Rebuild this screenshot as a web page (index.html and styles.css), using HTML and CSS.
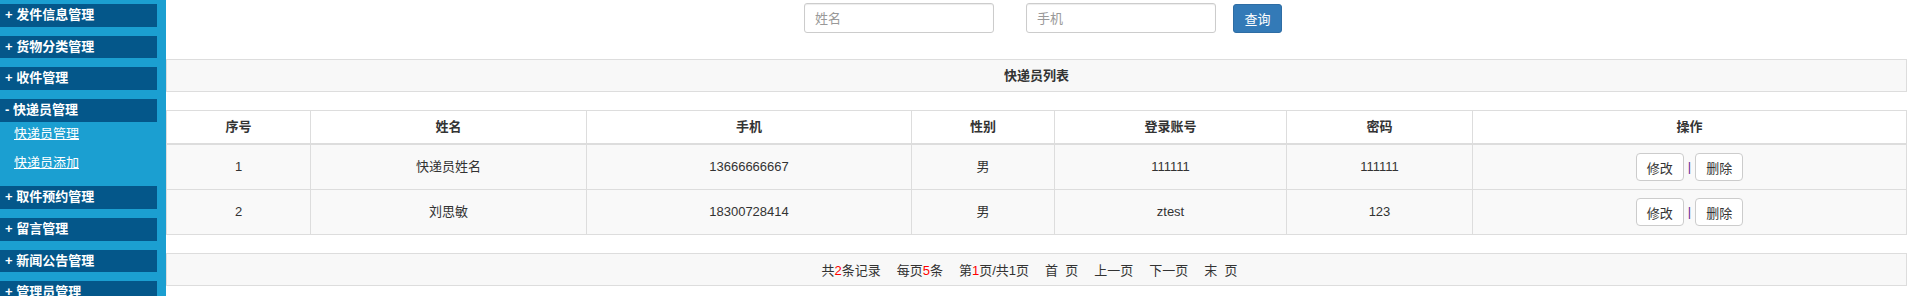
FILE: index.html
```html
<!DOCTYPE html>
<html>

<head>
<meta charset="UTF-8">
	<title>快递员列表</title>
	<link rel="stylesheet" href="styles.css">
</head>

<body>
	<div class="layout">
		<!-- left menu -->
		<div class="side">
			<ul class="menu">
				<li><div class="menu-head">+ 发件信息管理</div></li>
				<li><div class="menu-head">+ 货物分类管理</div></li>
				<li><div class="menu-head">+ 收件管理</div></li>
				<li class="open">
					<div class="menu-head">- 快递员管理</div>
					<ul class="sub">
						<li><a href="#">快递员管理</a></li>
						<li><a href="#">快递员添加</a></li>
					</ul>
				</li>
				<li><div class="menu-head">+ 取件预约管理</div></li>
				<li><div class="menu-head">+ 留言管理</div></li>
				<li><div class="menu-head">+ 新闻公告管理</div></li>
				<li><div class="menu-head">+ 管理员管理</div></li>
			</ul>
		</div>

		<div class="main">
			<!-- search -->
			<form class="search" onsubmit="event.preventDefault();">
				<input type="text" class="form-input name-input" placeholder="姓名">
				<input type="text" class="form-input phone-input" placeholder="手机">
				<button type="submit" class="btn-query">查询</button>
			</form>

			<div class="panel-title">快递员列表</div>

			<!-- courier list -->
			<table class="list" id="courierList">
				<colgroup>
					<col class="c-no">
					<col class="c-name">
					<col class="c-phone">
					<col class="c-sex">
					<col class="c-account">
					<col class="c-pwd">
					<col>
				</colgroup>
				<thead>
					<tr>
						<th>序号</th>
						<th>姓名</th>
						<th>手机</th>
						<th>性别</th>
						<th>登录账号</th>
						<th>密码</th>
						<th>操作</th>
					</tr>
				</thead>
				<tbody>
					<tr>
						<td>1</td>
						<td>快递员姓名</td>
						<td>13666666667</td>
						<td>男</td>
						<td>111111</td>
						<td>111111</td>
						<td>
							<div class="ops"><button class="btn-op">修改</button><span class="sep">|</span><button class="btn-op">删除</button></div>
						</td>
					</tr>
					<tr>
						<td>2</td>
						<td>刘思敏</td>
						<td>18300728414</td>
						<td>男</td>
						<td>ztest</td>
						<td>123</td>
						<td>
							<div class="ops"><button class="btn-op">修改</button><span class="sep">|</span><button class="btn-op">删除</button></div>
						</td>
					</tr>
				</tbody>
			</table>

			<!-- pager -->
			<div class="pager">
				<span>共<em>2</em>条记录</span>
				<span>每页<em>5</em>条</span>
				<span>第<em>1</em>页/共1页</span>
				<span>首&nbsp;&nbsp;页</span>
				<span>上一页</span>
				<span>下一页</span>
				<span>末&nbsp;&nbsp;页</span>
			</div>
		</div>
	</div>
</body>

</html>
```

FILE: styles.css
```css
body {
  margin: 0;
  font-family: "Liberation Sans", "Noto Sans CJK SC", sans-serif;
  font-size: 13px;
  color: #333;
  background-color: #fff;
}

.layout {
  display: flex;
  min-height: 100vh;
}

/* left menu */
.side {
  width: 166px;
  flex-shrink: 0;
  background-color: #1b9fd1;
}

.menu {
  list-style: none;
  margin: 0;
  padding: 4px 0 0;
}

.menu-head {
  width: 152px;
  height: 22.7px;
  line-height: 22.7px;
  margin-bottom: 9px;
  padding-left: 5px;
  background-color: #04578a;
  color: #fff;
  font-weight: bold;
  font-size: 13px;
  white-space: nowrap;
}

.open .menu-head {
  margin-bottom: 0;
}

.sub {
  list-style: none;
  margin: -3px 0 9.5px;
  padding: 0;
}

.sub li {
  line-height: 29px;
  padding-left: 14px;
}

.sub a {
  color: #fff;
  text-decoration: underline;
  font-size: 13px;
}

/* main area */
.main {
  flex: 1;
  min-width: 0;
}

.search {
  display: flex;
  align-items: center;
  justify-content: center;
  padding: 3px 0 0 13px;
  margin: 0 0 26px;
  height: 30px;
}

.form-input {
  width: 190px;
  height: 30px;
  box-sizing: border-box;
  padding: 0 10px;
  border: 1px solid #ccc;
  border-radius: 3px;
  box-shadow: inset 0 1px 1px rgba(0, 0, 0, 0.075);
  font-family: inherit;
  font-size: 13px;
  color: #555;
}

.form-input::placeholder {
  color: #999;
}

.name-input {
  margin-right: 32px;
}

.phone-input {
  margin-right: 17px;
}

.btn-query {
  width: 49px;
  height: 29px;
  padding: 0;
  border: 1px solid #2e6da4;
  border-radius: 3px;
  background-color: #337ab7;
  color: #fff;
  font-family: inherit;
  font-size: 13px;
  cursor: pointer;
}

.panel-title {
  height: 31px;
  line-height: 31px;
  border: 1px solid #ddd;
  background-color: #f8f8f8;
  text-align: center;
  font-weight: bold;
  color: #333;
  margin-bottom: 18px;
}

table.list {
  width: 100%;
  border-collapse: collapse;
  table-layout: fixed;
}

.c-no { width: 144px; }
.c-name { width: 276px; }
.c-phone { width: 325px; }
.c-sex { width: 143px; }
.c-account { width: 232px; }
.c-pwd { width: 186px; }

.list th,
.list td {
  border: 1px solid #ddd;
  padding: 8px;
  text-align: center;
  vertical-align: middle;
}

.list th {
  line-height: 16px;
  font-weight: bold;
  background-color: #fff;
  border-bottom-width: 2px;
}

.list td {
  height: 28px;
  line-height: 18px;
  background-color: #f9f9f9;
}

.ops {
  display: flex;
  justify-content: center;
  align-items: center;
  gap: 4px;
}

.btn-op {
  width: 48px;
  height: 28px;
  padding: 0;
  border: 1px solid #ccc;
  border-radius: 4px;
  background-color: #fff;
  color: #333;
  font-family: inherit;
  font-size: 13px;
  cursor: pointer;
}

.sep {
  color: #6b2c91;
}

.pager {
  margin-top: 18px;
  height: 31px;
  border: 1px solid #ddd;
  background-color: #f8f8f8;
  display: flex;
  justify-content: center;
  align-items: center;
  gap: 16px;
  padding-right: 14px;
  color: #333;
}

.pager em {
  font-style: normal;
  color: red;
}
```
